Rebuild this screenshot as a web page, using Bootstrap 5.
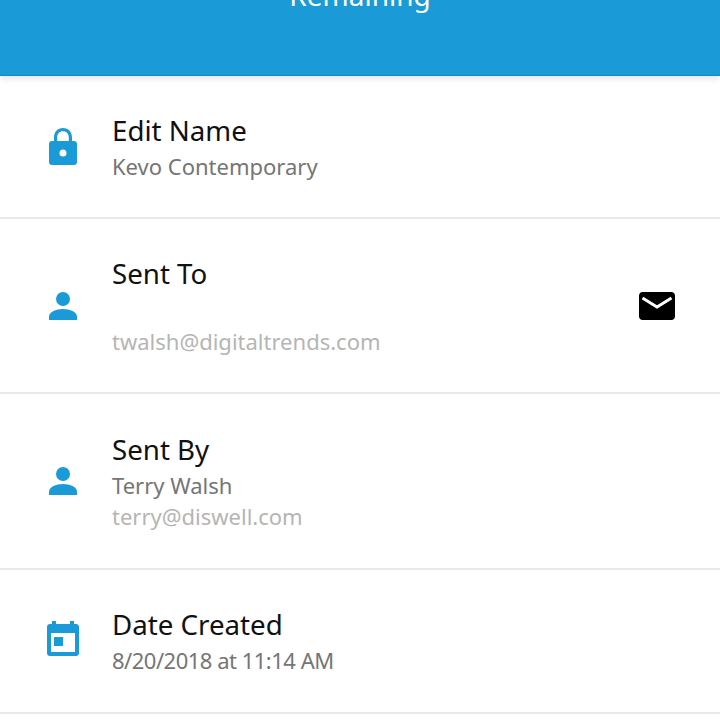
<!DOCTYPE html>
<html lang="en">
<head>
    <meta charset="UTF-8">
    <meta name="viewport" content="width=device-width, initial-scale=1.0">
    <title>Lock Details</title>
    <link href="https://cdn.jsdelivr.net/npm/bootstrap@5.3.2/dist/css/bootstrap.min.css" rel="stylesheet">
    <style>
        html, body { height: 720px; overflow: hidden; }
        body { font-family: "Noto Sans", "Open Sans", sans-serif; background: #fff; }
        .top-bar {
            height: 76px;
            background: #1a9ad6;
            border-bottom: 1px solid #1788bd;
            box-shadow: 0 3px 6px rgba(0, 0, 0, .1);
            overflow: hidden;
            color: #fff;
            font-size: 28px;
            line-height: 30px;
            position: relative;
        }
        .top-bar-text { margin-top: -20px; }
        .info-row { border-bottom: 2px solid #e9e9e9; padding-left: 47px; padding-right: 45px; }
        .row-a { height: 143px; }
        .row-b { height: 175px; }
        .row-c { height: 176px; }
        .row-d { height: 144px; }
        .row-icon { width: 32px; margin-right: 33px; flex: none; }
        .row-icon svg { display: block; }
        .cal-icon { margin-bottom: 5px; }
        .row-text { margin-bottom: 1px; }
        .row-title { font-size: 27.7px; line-height: 38px; margin-bottom: 2px; color: #111; }
        .row-sub { font-size: 22px; line-height: 31px; color: #757575; }
        .row-mail { font-size: 22px; line-height: 31px; color: #b5b5b5; }
        .row-date { letter-spacing: -.5px; }
        .gap-line { height: 32px; }
    </style>
</head>
<body>
<div class="top-bar text-center">
    <div class="top-bar-text">Remaining</div>
</div>

<div class="info-row row-a d-flex align-items-center">
    <div class="row-icon d-flex justify-content-center">
        <svg width="28" height="37" viewBox="0 0 28 37"><path fill="#1a9ad6" fill-rule="evenodd" d="M14 0C8.500 0 5 4 5 9.500V13H3c-1.700 0-3 1.300-3 3v18c0 1.700 1.300 3 3 3h22c1.700 0 3-1.300 3-3V16c0-1.700-1.300-3-3-3h-2V9.500C23 4 19.500 0 14 0zm0 3.200c3.600 0 5.800 2.700 5.800 6.300V13H8.200V9.500c0-3.600 2.200-6.300 5.800-6.300zM14 21.500a3.500 3.500 0 1 1 0 7 3.500 3.500 0 0 1 0-7z"/></svg>
    </div>
    <div class="row-text">
        <div class="row-title">Edit Name</div>
        <div class="row-sub">Kevo Contemporary</div>
    </div>
</div>

<div class="info-row row-b d-flex align-items-center">
    <div class="row-icon d-flex justify-content-center">
        <svg width="28" height="28" viewBox="0 0 28 28"><circle cx="14" cy="7" r="7" fill="#1a9ad6"/><path fill="#1a9ad6" d="M0 28v-3.500C0 20 7 17 14 17s14 3 14 7.500V28z"/></svg>
    </div>
    <div class="row-text flex-grow-1">
        <div class="row-title">Sent To</div>
        <div class="gap-line"></div>
        <div class="row-mail">twalsh@digitaltrends.com</div>
    </div>
    <svg width="36" height="28" viewBox="0 0 36 28"><path fill="#000" d="M3.500 0h29C34.400 0 36 1.600 36 3.500v21c0 1.900-1.600 3.500-3.500 3.500h-29C1.600 28 0 26.400 0 24.500v-21C0 1.600 1.600 0 3.500 0z"/><path fill="none" stroke="#fff" stroke-width="3" d="M3.500 6 18 15l14.500-9"/></svg>
</div>

<div class="info-row row-c d-flex align-items-center">
    <div class="row-icon d-flex justify-content-center">
        <svg width="28" height="28" viewBox="0 0 28 28"><circle cx="14" cy="7" r="7" fill="#1a9ad6"/><path fill="#1a9ad6" d="M0 28v-3.500C0 20 7 17 14 17s14 3 14 7.500V28z"/></svg>
    </div>
    <div class="row-text">
        <div class="row-title">Sent By</div>
        <div class="row-sub">Terry Walsh</div>
        <div class="row-mail">terry@diswell.com</div>
    </div>
</div>

<div class="info-row row-d d-flex align-items-center">
    <div class="row-icon cal-icon d-flex justify-content-center">
        <svg width="32" height="35" viewBox="0 0 32 35"><path fill="#1a9ad6" fill-rule="evenodd" d="M5 0h4v3h14V0h4v3h2c1.700 0 3 1.300 3 3v26c0 1.700-1.300 3-3 3H3c-1.700 0-3-1.300-3-3V6c0-1.700 1.300-3 3-3h2zM4 12v19h24V12zM7 16h9v9H7z"/></svg>
    </div>
    <div class="row-text">
        <div class="row-title">Date Created</div>
        <div class="row-sub row-date">8/20/2018 at 11:14 AM</div>
    </div>
</div>

<script src="https://cdn.jsdelivr.net/npm/bootstrap@5.3.2/dist/js/bootstrap.bundle.min.js"></script>
</body>
</html>
